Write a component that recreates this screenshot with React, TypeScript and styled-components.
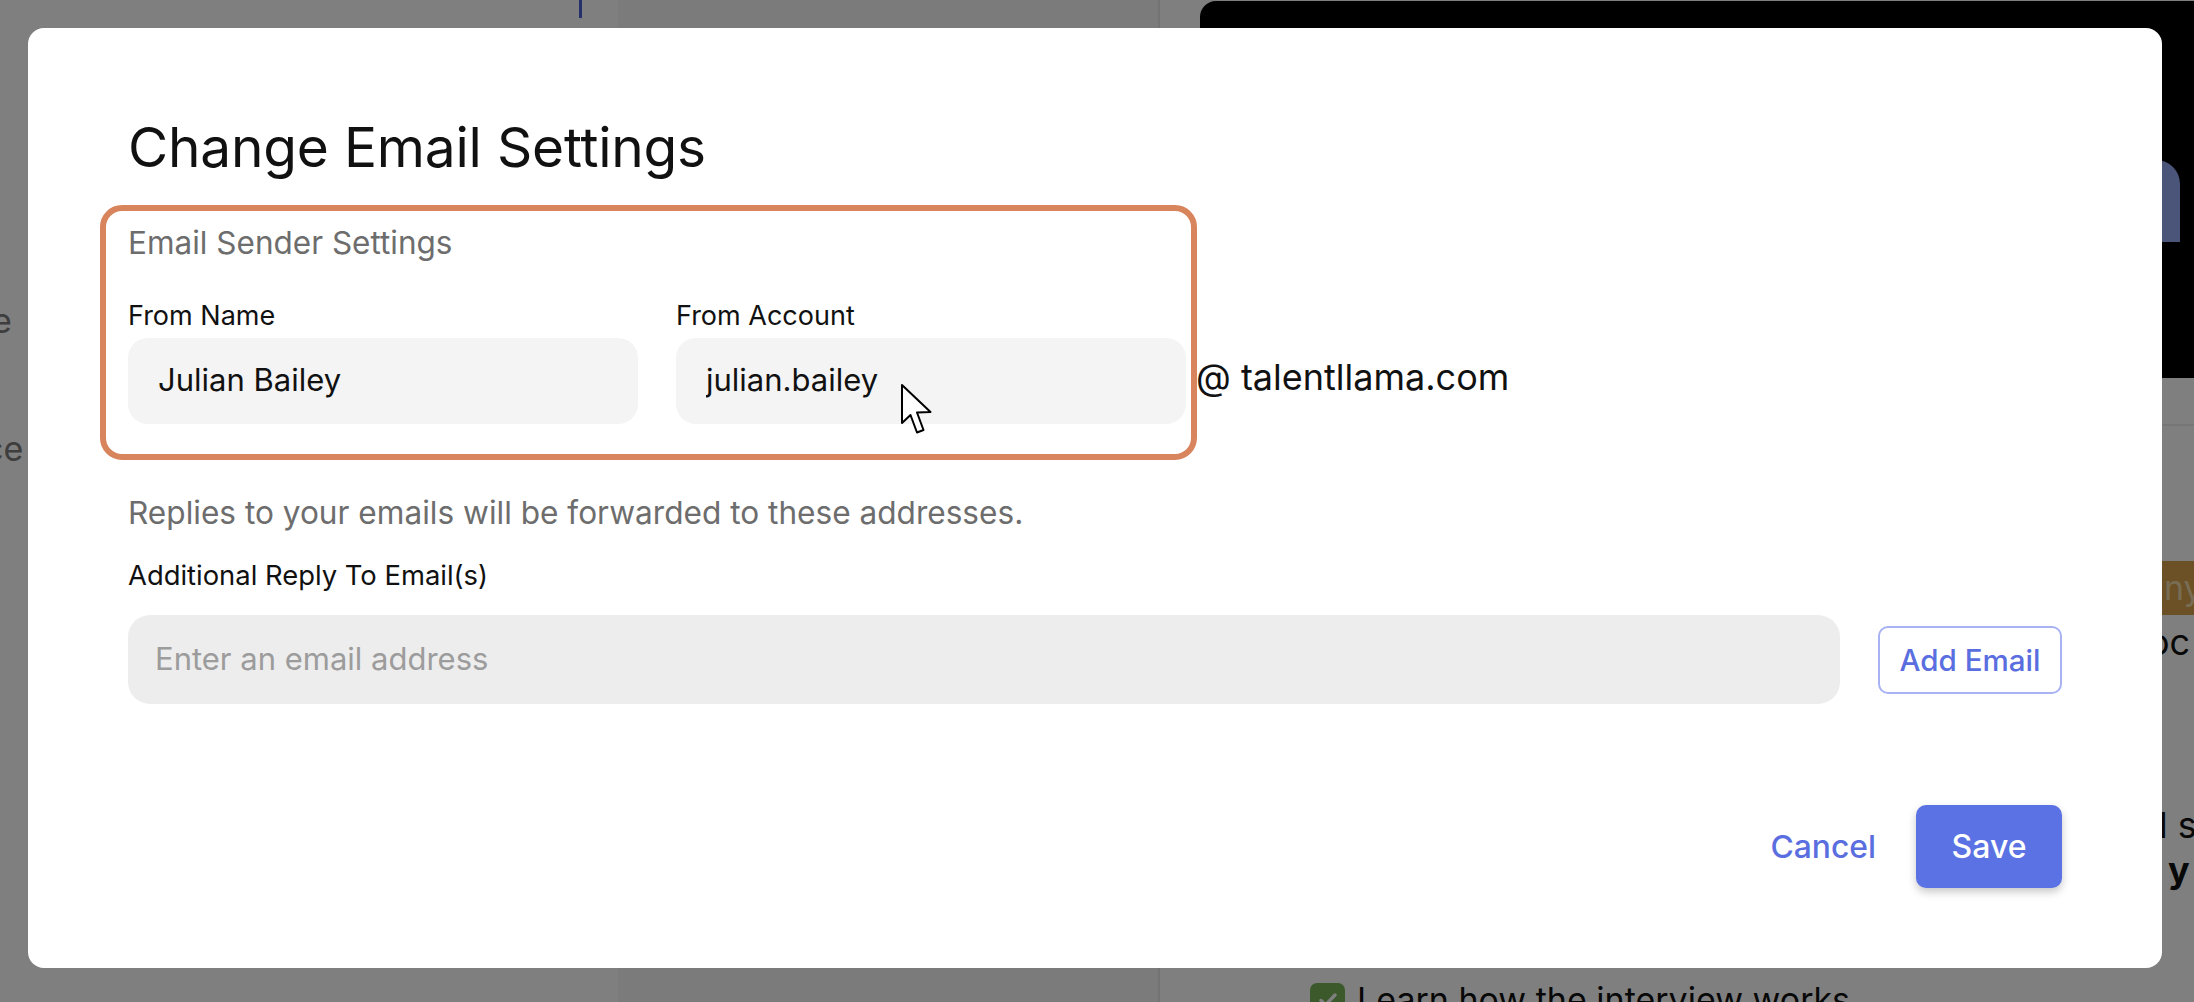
import React from 'react'
import styled, { createGlobalStyle } from 'styled-components'

const GlobalStyle = createGlobalStyle`
  html, body {
    margin: 0;
    padding: 0;
  }
  body {
    font-family: Inter, 'Noto Sans', sans-serif;
    background: #fff;
    color: #111;
  }
  * {
    box-sizing: border-box;
  }
`

const Page = styled.div`
  position: relative;
  width: 2194px;
  height: 1002px;
  overflow: hidden;
  display: flex;
  background: #fff;
`

const Sidebar = styled.aside`
  width: 618px;
  flex: none;
  display: flex;
  flex-direction: column;
  background: #fff;
  overflow: hidden;
`

const TabStrip = styled.div`
  display: flex;
  justify-content: flex-end;
  padding-right: 36px;
  height: 18px;
  flex: none;
`

const TabMark = styled.span`
  width: 3px;
  height: 18px;
  background: #4a5fd6;
`

const SideItem = styled.div<{ $top: number; $shift: number }>`
  flex: none;
  margin-top: ${({ $top }) => $top}px;
  margin-left: ${({ $shift }) => $shift}px;
  font-size: 34px;
  line-height: 40px;
  color: #7c7c7c;
  white-space: nowrap;
`

const Middle = styled.section`
  width: 542px;
  flex: none;
  background: #f7f7f7;
  border-right: 2px solid #e6e6e6;
`

const Main = styled.main`
  flex: 1;
  display: flex;
  flex-direction: column;
  background: #fff;
  overflow: hidden;
  & > * {
    flex: none;
  }
`

const HeroCard = styled.div`
  margin: 1px 0 0 40px;
  height: 377px;
  background: #000;
  border-top-left-radius: 16px;
  display: flex;
  justify-content: flex-end;
  align-items: flex-start;
  padding: 159px 14px 0 0;
`

const HeroGlyph = styled.div`
  width: 47px;
  height: 82px;
  background: #96a9f2;
  border-top-right-radius: 24px;
`

const Divider = styled.div`
  height: 48px;
  border-bottom: 2px solid #ececec;
`

const MainBody = styled.div`
  display: flex;
  flex-direction: column;
  & > * {
    flex: none;
  }
`

const EdgeRow = styled.div<{ $top: number; $indent: number; $bold?: boolean }>`
  margin-top: ${({ $top }) => $top}px;
  padding-left: ${({ $indent }) => $indent}px;
  font-size: 36px;
  line-height: 44px;
  font-weight: ${({ $bold }) => ($bold ? 700 : 400)};
  color: #111;
  white-space: nowrap;
`

const Badge = styled.div`
  margin-top: 135px;
  margin-left: 1000px;
  height: 54px;
  padding-left: 4px;
  background: #d6a24a;
  color: #f3d9a8;
  font-size: 34px;
  line-height: 54px;
  white-space: nowrap;
`

const TaskRow = styled.div`
  margin-top: 87px;
  padding-left: 150px;
  display: flex;
  align-items: center;
  gap: 12px;
  font-size: 34px;
  line-height: 42px;
  color: #111;
  white-space: nowrap;
`

const CheckBox = styled.span`
  width: 35px;
  height: 35px;
  border-radius: 7px;
  background: #77b255;
  display: flex;
  align-items: center;
  justify-content: center;
`

const Backdrop = styled.div`
  position: absolute;
  inset: 0;
  background: rgba(0, 0, 0, 0.5);
  padding: 28px;
  display: flex;
  align-items: flex-start;
`

const Modal = styled.div`
  width: 2134px;
  height: 940px;
  background: #fff;
  border-radius: 16px;
  padding: 85px 100px 0;
  display: flex;
  flex-direction: column;
`

const Title = styled.h1`
  margin: 0;
  font-size: 55px;
  line-height: 68px;
  font-weight: 400;
  color: #111;
  letter-spacing: -0.2px;
`

const SenderSection = styled.section`
  position: relative;
  margin-top: 44px;
`

const Highlight = styled.div`
  position: absolute;
  top: -20px;
  left: -28px;
  width: 1097px;
  height: 255px;
  border: 6px solid #d8845c;
  border-radius: 22px;
  pointer-events: none;
`

const SectionTitle = styled.h2`
  margin: 0;
  font-size: 31.5px;
  line-height: 36px;
  font-weight: 400;
  color: #6d6d6d;
`

const FieldsRow = styled.div`
  margin-top: 39px;
  display: flex;
  align-items: flex-end;
  gap: 38px;
`

const Field = styled.label`
  width: 510px;
  display: flex;
  flex-direction: column;
  gap: 6px;
`

const Label = styled.span`
  font-size: 27px;
  line-height: 32px;
  color: #111;
`

const InputWrap = styled.div`
  position: relative;
`

const TextInput = styled.input<{ $tone?: 'light' | 'mid' }>`
  width: 100%;
  height: 86px;
  border: none;
  outline: none;
  border-radius: 20px;
  padding: 0 30px 3px;
  background: ${({ $tone }) => ($tone === 'mid' ? '#ededed' : '#f4f4f4')};
  font-family: Inter, 'Noto Sans', sans-serif;
  font-size: 31px;
  color: #111;
  &::placeholder {
    color: #9c9c9c;
  }
`

const Domain = styled.span`
  margin-left: -28px;
  height: 86px;
  line-height: 79px;
  font-size: 36px;
  color: #111;
  white-space: nowrap;
`

const Pointer = styled.svg`
  position: absolute;
  left: 224px;
  top: 45px;
  width: 33px;
  height: 52px;
`

const Hint = styled.p`
  margin: 71px 0 0;
  font-size: 31.6px;
  line-height: 36px;
  color: #6d6d6d;
`

const ReplyLabel = styled(Label)`
  margin-top: 28px;
  font-size: 27.4px;
`

const ReplyRow = styled.div`
  margin-top: 24px;
  display: flex;
  align-items: center;
  gap: 38px;
`

const EmailInput = styled(TextInput)`
  flex: 1;
  height: 89px;
  border-radius: 22px;
  padding: 0 27px 3px;
  font-size: 31px;
`

const OutlineButton = styled.button`
  width: 184px;
  height: 68px;
  flex: none;
  border: 2px solid #a9b3f4;
  border-radius: 10px;
  background: #fff;
  color: #5a6ee0;
  font-family: Inter, 'Noto Sans', sans-serif;
  font-size: 29.6px;
  font-weight: 500;
  padding: 0;
  cursor: pointer;
`

const Footer = styled.div`
  margin-top: 101px;
  display: flex;
  justify-content: flex-end;
  align-items: center;
  gap: 40px;
`

const TextButton = styled.button`
  border: none;
  background: none;
  padding: 0;
  color: #5a6ee0;
  font-family: Inter, 'Noto Sans', sans-serif;
  font-size: 31.8px;
  font-weight: 500;
  cursor: pointer;
`

const PrimaryButton = styled.button`
  width: 146px;
  height: 83px;
  border: none;
  border-radius: 10px;
  background: #5a72e4;
  color: #fff;
  font-family: Inter, 'Noto Sans', sans-serif;
  font-size: 32px;
  font-weight: 500;
  box-shadow: 0 4px 8px rgba(0, 0, 0, 0.22);
  cursor: pointer;
`

const App = () => {
  return (
    <>
      <GlobalStyle />
      <Page>
        <Sidebar>
          <TabStrip>
            <TabMark />
          </TabStrip>
          <SideItem $top={283} $shift={-8}>
            e
          </SideItem>
          <SideItem $top={88} $shift={-16}>
            ce
          </SideItem>
        </Sidebar>
        <Middle />
        <Main>
          <HeroCard>
            <HeroGlyph />
          </HeroCard>
          <Divider />
          <MainBody>
            <Badge>ny</Badge>
            <EdgeRow $top={5} $indent={988}>
              oc
            </EdgeRow>
            <EdgeRow $top={139} $indent={999}>
              l s
            </EdgeRow>
            <EdgeRow $top={1} $indent={1008} $bold>
              y
            </EdgeRow>
            <TaskRow>
              <CheckBox>
                <svg width='24' height='24' viewBox='0 0 24 24'>
                  <path d='M5 12.5l4.5 4.5L19 7' fill='none' stroke='#fff' strokeWidth='3.4' strokeLinecap='round' strokeLinejoin='round' />
                </svg>
              </CheckBox>
              Learn how the interview works
            </TaskRow>
          </MainBody>
        </Main>

        <Backdrop>
          <Modal>
            <Title>Change Email Settings</Title>
            <SenderSection>
              <SectionTitle>Email Sender Settings</SectionTitle>
              <FieldsRow>
                <Field>
                  <Label>From Name</Label>
                  <InputWrap>
                    <TextInput defaultValue='Julian Bailey' />
                  </InputWrap>
                </Field>
                <Field>
                  <Label>From Account</Label>
                  <InputWrap>
                    <TextInput defaultValue='julian.bailey' />
                    <Pointer viewBox='0 0 33 52'>
                      <path
                        d='M2 2 V40 L10.5 32 L17 49.5 L23.5 47 L17 29.5 L30.5 29 Z'
                        fill='#fff'
                        stroke='#000'
                        strokeWidth='2'
                        strokeLinejoin='round'
                      />
                    </Pointer>
                  </InputWrap>
                </Field>
                <Domain>@ talentllama.com</Domain>
              </FieldsRow>
              <Highlight />
            </SenderSection>

            <Hint>Replies to your emails will be forwarded to these addresses.</Hint>
            <ReplyLabel>Additional Reply To Email(s)</ReplyLabel>
            <ReplyRow>
              <EmailInput $tone='mid' placeholder='Enter an email address' />
              <OutlineButton>Add Email</OutlineButton>
            </ReplyRow>

            <Footer>
              <TextButton>Cancel</TextButton>
              <PrimaryButton>Save</PrimaryButton>
            </Footer>
          </Modal>
        </Backdrop>
      </Page>
    </>
  )
}

export default App
